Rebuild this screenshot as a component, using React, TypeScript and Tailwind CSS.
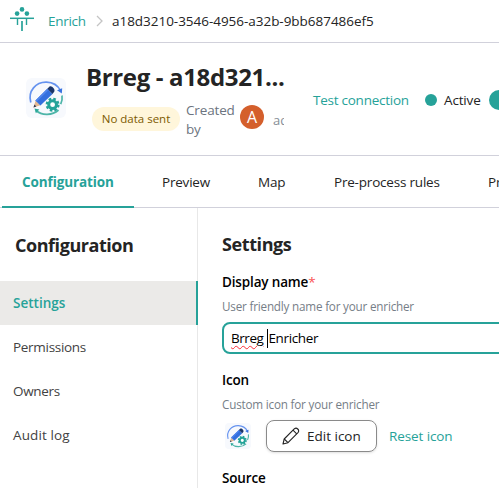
import type { ReactNode } from "react";

const TABS = [
  { label: "Preview", className: "ml-7 w-[48px] tracking-[-0.2px]" },
  { label: "Map", className: "ml-12 w-[28px] tracking-[-0.2px]" },
  { label: "Pre-process rules", className: "ml-12 w-[106px] tracking-[-0.2px]" },
  { label: "Processing", className: "ml-12" },
];

const SIDE_LINKS = [
  { label: "Permissions", className: "tracking-[-0.3px]" },
  { label: "Owners", className: "tracking-[-0.3px]" },
  { label: "Audit log", className: "tracking-[0.1px]" },
];

function Logo() {
  return (
    <svg width="24" height="28" viewBox="0 0 24 28" fill="none" stroke="#26a299" className="shrink-0">
      <g fill="#26a299" stroke="none">
        <circle cx="12" cy="2.4" r="2.3" />
        <circle cx="7.1" cy="6.6" r="2.3" />
        <circle cx="16.9" cy="6.6" r="2.3" />
      </g>
      <path d="M0 11.3h24" strokeWidth="1.5" />
      <path d="M7.5 11.5v6.5M16.5 11.5v6.5" strokeWidth="1.4" />
      <path d="M12 14v10" strokeWidth="1.7" />
    </svg>
  );
}

function EnricherIcon({ className }: { className: string }) {
  return (
    <svg viewBox="0 0 40 40" className={`shrink-0 ${className}`} fill="none">
      <rect width="40" height="40" rx="6" fill="#f7f9fd" />
      <path d="M4.8 24.5C1.5 13 10 3.8 20.5 4.1c6.5.2 11.5 3.6 14 8.4" stroke="#6693ef" strokeWidth="1.7" />
      <path d="M31 12.3l5.2-2-.4 5.2z" fill="#3973e0" />
      <path d="M36 17.5c.7 4.5-.4 6.5-1.4 8.7M32.5 32c-6 5.5-16.5 6-22.500.5" stroke="#4db5a8" strokeWidth="1.7" />
      <path d="M8.5 30.6l4.8.8-3.4 3.8z" fill="#2da99a" />
      <path d="M7.5 29.4l2.1-6.8 4.8 4.6z" fill="#e3b994" />
      <path d="M7.5 29.4l.9-2.8 2 1.9z" fill="#303a54" />
      <path d="M9.4 22.4L21.3 10.8l5.2 5.1-12.1 11.5z" fill="#3470de" />
      <path d="M9.4 22.4L21.3 10.8l1.3 1.3L10.7 23.7z" fill="#4f85ec" />
      <path d="M21.3 10.8l2-2c2-1.8 6.4 2.4 4.9 5l-1.7 2.1z" fill="#1b3568" />
      <circle cx="26.6" cy="26.7" r="5.8" stroke="#24a398" strokeWidth="2.4" strokeDasharray="2.55 2" />
      <circle cx="26.6" cy="26.7" r="3.9" fill="#fff" stroke="#24a398" strokeWidth="3" />
    </svg>
  );
}

function EditPencil() {
  return (
    <svg width="18" height="18" viewBox="0 0 18 18" fill="none" stroke="#242424" strokeWidth="1.1" strokeLinejoin="round">
      <path d="M1 17l1.2-5L12.5 1.7c2.2-1.7 5.2 1.3 3.7 3.6L6 15.7z" />
      <path d="M11 3.2l3.7 3.7M2.2 12L6 15.7" />
    </svg>
  );
}

type FieldLabelProps = {
  title: string;
  required?: boolean;
  children?: ReactNode;
}

function FieldLabel({ title, required, children }: FieldLabelProps) {
  return (
    <div>
      <div className="h-5 text-[13.5px] leading-5 font-semibold tracking-[-0.15px] text-black">
        {title}
        {required && <span className="font-normal text-[#fa5252]">*</span>}
      </div>
      {children && (
        <div className="mt-1 h-5 text-[11.7px] leading-5 tracking-[-0.2px] text-[#767e87]">{children}</div>
      )}
    </div>
  );
}

export default function App() {
  return (
    <div className="h-[488px] w-[499px] overflow-hidden bg-white font-['Open_Sans',sans-serif] text-[13.5px] whitespace-nowrap text-[#242424]">
      <header className="flex h-[43px] items-center border-b border-[#d1d1db] pl-2.5">
        <Logo />
        <a className="ml-3.5 w-[38px] tracking-[-0.3px] text-[#26a299]">Enrich</a>
        <svg width="8" height="12" viewBox="0 0 8 12" fill="none" stroke="#c4c4c4" strokeWidth="1.3" className="ml-2.5">
          <path d="M1 1l5 5-5 5" />
        </svg>
        <span className="ml-2 tracking-[-0.03px]">a18d3210-3546-4956-a32b-9bb687486ef5</span>
      </header>

      <section className="flex h-[113px] border-b border-[#d1d1db] pl-[26px]">
        <EnricherIcon className="mt-[35px] size-10" />
        <div className="ml-5 w-[198px]">
          <h1 className="mt-[18px] h-8 text-2xl leading-8 font-bold tracking-[-0.35px]">Brreg - a18d321...</h1>
          <div className="mt-[7px] flex h-11 items-start overflow-hidden pl-1.5">
            <span className="mt-[7px] flex h-6 w-[88px] shrink-0 items-center justify-center rounded-full bg-[#fff6db] text-[11.5px] text-[#7d5a00]">
              No data sent
            </span>
            <span className="mt-px ml-1.5 w-12 shrink-0 leading-[19px] tracking-[-0.15px] whitespace-normal text-[#6c7480]">
              Created by
            </span>
            <span className="mt-[5px] ml-1.5 flex size-6 shrink-0 items-center justify-center rounded-full bg-[#d45f2c] text-base text-white">
              A
            </span>
            <span className="mt-[11px] ml-[9px] w-[11px] shrink-0 overflow-hidden text-[13px] text-[#868e96]">admin</span>
          </div>
        </div>
        <div className="mt-[47px] ml-[29px] flex h-5 shrink-0 items-center">
          <a className="w-[97px] tracking-[-0.25px] text-[#26a299]">Test connection</a>
          <span className="ml-[15px] size-3 rounded-full bg-[#26a299]" />
          <span className="ml-[7px] w-[38px] tracking-[-0.15px]">Active</span>
          <span className="ml-[7px] h-5 w-10 shrink-0 rounded-full bg-[#26a299]" />
        </div>
      </section>

      <nav className="flex h-[52px] items-center border-b border-[#d1d1db] pl-0.5">
        <div className="flex h-[52px] w-[132px] shrink-0 items-center border-b-2 border-[#26a299] pt-[3px] pl-5 font-bold tracking-[-0.1px] text-[#26a299]">
          Configuration
        </div>
        {TABS.map((tab) => (
          <div key={tab.label} className={`shrink-0 pt-0.5 ${tab.className}`}>{tab.label}</div>
        ))}
      </nav>

      <div className="flex h-[280px]">
        <aside className="w-[198px] shrink-0 border-r border-[#e8e8e8]">
          <h2 className="h-[73px] pt-[25px] pl-[15px] text-lg leading-6 font-bold tracking-[-0.45px]">Configuration</h2>
          <div className="-mr-px flex h-11 items-center border-r-2 border-[#26a299] bg-[#ebeae8] pl-[13px] font-semibold text-[#26a299]">
            Settings
          </div>
          {SIDE_LINKS.map((link) => (
            <div key={link.label} className={`flex h-11 items-center pl-[13px] text-[#424242] ${link.className}`}>
              {link.label}
            </div>
          ))}
        </aside>
        <main className="min-w-0 flex-1 overflow-hidden pl-6">
          <h2 className="mt-6 h-6 text-lg leading-6 font-bold tracking-[-0.4px]">Settings</h2>
          <div className="mt-4">
            <FieldLabel title="Display name" required>User friendly name for your enricher</FieldLabel>
          </div>
          <div className="mt-1.5 flex h-8 w-[400px] items-center rounded-lg border-2 border-[#26a299] pt-px pl-[7px] text-black">
            <span className="tracking-[-0.45px] underline decoration-red-500 decoration-wavy decoration-1 underline-offset-2">
              Brreg
            </span>
            <span className="ml-1 h-[19px] w-px bg-black" />
            <span className="tracking-[-0.35px]">Enricher</span>
          </div>
          <div className="mt-4">
            <FieldLabel title="Icon">Custom icon for your enricher</FieldLabel>
          </div>
          <div className="mt-1.5 flex h-8 items-center pl-[3px]">
            <EnricherIcon className="size-[26px]" />
            <button className="ml-[15px] flex h-8 w-[111px] items-center rounded-lg border border-[#8a8a8a] pl-[15px] shadow-sm">
              <EditPencil />
              <span className="ml-[7px]">Edit icon</span>
            </button>
            <a className="ml-3 tracking-[-0.1px] text-[#26a299]">Reset icon</a>
          </div>
          <div className="mt-4">
            <FieldLabel title="Source" />
          </div>
        </main>
      </div>
    </div>
  );
}
